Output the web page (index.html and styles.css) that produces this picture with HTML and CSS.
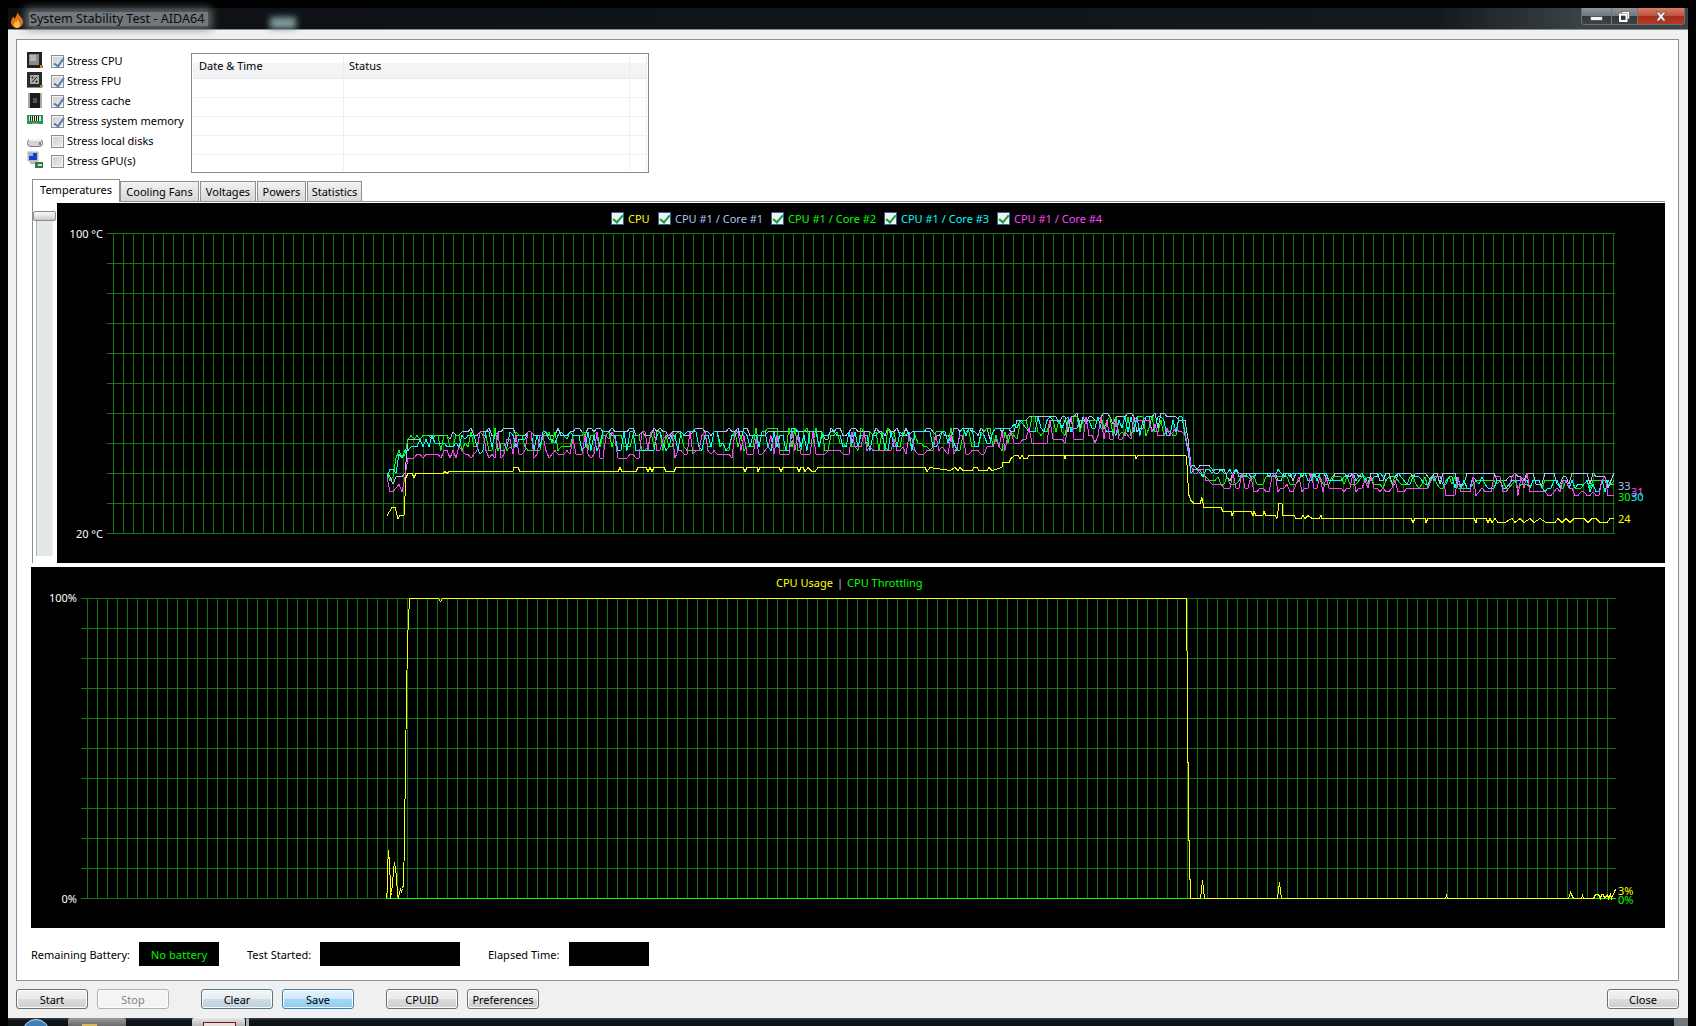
FILE: index.html
```html
<!DOCTYPE html>
<html lang="en">

<head>
    <meta charset="UTF-8">
    <title>System Stability Test - AIDA64</title>
    <link rel="stylesheet" href="styles.css">
</head>

<body>
    <div class="window">
        <div class="titlebar">
            <span class="title-smudge"></span>
            <svg class="title-icon" width="14" height="16" viewBox="0 0 14 16">
                <path d="M7 0c1 3 5 5 6 9 .6 3.500-2.500 7-6 7s-6.500-3-6-6.500c.3-2 1.500-3 2-5 .8.8 1.200 1.500 1.300 2.500C5.500 5 7.500 3 7 0z" fill="#e8701a"/>
                <path d="M7 7c.8 2 3 3 3 5.200S8.500 16 7 16s-3.200-1.500-3-3.500c.2-1.500 1.200-2 1.500-3.200.3.400.5.800.6 1.200C6.800 9.800 7.300 8.500 7 7z" fill="#fcc23a"/>
            </svg>
            <span class="title-text">System Stability Test - AIDA64</span>
            <div class="caption-buttons">
                <div class="caption-btn btn-min"><span class="min-bar"></span></div>
                <div class="caption-btn btn-restore">
                    <svg width="11" height="11" viewBox="0 0 11 11">
                        <path d="M3 .5h7.500V8H8.500V2.500H3z" fill="#fff" stroke="#333" stroke-width=".5"/>
                        <rect x="1" y="3.500" width="6.500" height="6.500" fill="none" stroke="#fff" stroke-width="2"/>
                    </svg>
                </div>
                <div class="caption-btn btn-close">
                    <svg width="14" height="11" viewBox="0 0 14 11">
                        <path d="M2 1h3l2 2.500L9 1h3L8.800 5.500 12 10H9L7 7.500 5 10H2l3.200-4.500z" fill="#f4f4f4" stroke="#444" stroke-width=".7"/>
                    </svg>
                </div>
            </div>
        </div>

        <div class="client">
            <div class="panel">
                <div class="top-row">
                    <ul class="stress-list">
                        <li>
                            <svg class="stress-icon" viewBox="0 0 16 16">
                                <rect x="0" y="0" width="15" height="16" fill="#222"/>
                                <rect x="2" y="2" width="10" height="11" fill="#8a8a8a"/>
                                <rect x="3" y="3" width="6" height="6" fill="#b4b4b4"/>
                                <rect x="13" y="13" width="3" height="3" fill="#c88a20"/>
                            </svg>
                            <span class="check checked"></span>Stress CPU
                        </li>
                        <li>
                            <svg class="stress-icon" viewBox="0 0 16 16">
                                <rect x="0" y="0" width="15" height="15" fill="#2a2a2a"/>
                                <rect x="3" y="3" width="9" height="9" fill="#a8a8a8"/>
                                <path d="M5 10l5-5M5 5h1v1H5zM9 9h1v1H9z" stroke="#222" fill="none"/>
                                <rect x="0" y="15" width="15" height="1" fill="#888"/>
                                <rect x="13" y="13" width="3" height="2" fill="#c88a20"/>
                            </svg>
                            <span class="check checked"></span>Stress FPU
                        </li>
                        <li>
                            <svg class="stress-icon" viewBox="0 0 16 16">
                                <rect x="1" y="1" width="14" height="15" fill="#aaa"/>
                                <rect x="3" y="1" width="10" height="15" fill="#1c1c1c"/>
                                <rect x="6" y="6" width="4" height="5" fill="#555"/>
                            </svg>
                            <span class="check checked"></span>Stress cache
                        </li>
                        <li>
                            <svg class="stress-icon" viewBox="0 0 16 16">
                                <rect x="0" y="3" width="16" height="9" fill="#1f9a5a"/>
                                <rect x="2" y="4" width="12" height="5" fill="#e8e8d0"/>
                                <path d="M3.500 4v5M5.500 4v5M7.500 4v5M9.500 4v5M11.500 4v5" stroke="#222"/>
                                <rect x="5" y="11" width="6" height="1" fill="#d0a020"/>
                            </svg>
                            <span class="check checked"></span>Stress system memory
                        </li>
                        <li>
                            <svg class="stress-icon" viewBox="0 0 16 16">
                                <rect x="0.500" y="7.500" width="15" height="7" rx="3" fill="#d4d4d4" stroke="#777"/>
                                <rect x="2" y="7" width="12" height="2" fill="#f2f2f2"/>
                                <rect x="12" y="10" width="2" height="3" fill="#5aa33c"/>
                            </svg>
                            <span class="check"></span>Stress local disks
                        </li>
                        <li>
                            <svg class="stress-icon" viewBox="0 0 16 16">
                                <rect x="1" y="0" width="10" height="9" fill="#d8d8d8" stroke="#888" stroke-width=".6"/>
                                <rect x="2" y="1" width="8" height="7" fill="#1a3fc0"/>
                                <rect x="2" y="1" width="4" height="3" fill="#8ab0f0"/>
                                <rect x="3" y="9" width="6" height="3" fill="#bbb"/>
                                <rect x="8" y="10" width="8" height="6" fill="#2f7a4a"/>
                                <rect x="11" y="12" width="4" height="2" fill="#d0e0c0"/>
                            </svg>
                            <span class="check"></span>Stress GPU(s)
                        </li>
                    </ul>

                    <table class="log-table">
                        <thead>
                            <tr>
                                <th class="col-date">Date &amp; Time</th>
                                <th class="col-status">Status</th>
                                <th class="col-end"></th>
                            </tr>
                        </thead>
                        <tbody>
                            <tr><td></td><td></td><td></td></tr>
                            <tr><td></td><td></td><td></td></tr>
                            <tr><td></td><td></td><td></td></tr>
                            <tr><td></td><td></td><td></td></tr>
                            <tr><td></td><td></td><td></td></tr>
                        </tbody>
                    </table>
                </div>

                <ul class="tabs">
                    <li class="tab active">Temperatures</li>
                    <li class="tab tab-fans">Cooling Fans</li>
                    <li class="tab tab-volt">Voltages</li>
                    <li class="tab tab-pow">Powers</li>
                    <li class="tab tab-stat">Statistics</li>
                </ul>

                <div class="tab-page">
                    <div class="slider">
                        <div class="slider-track"></div>
                        <div class="slider-thumb"></div>
                    </div>
                    <div class="chart chart-temp">
                        <svg id="tempChart" class="chart-svg" viewBox="57 203 1608 360">
                            <text class="axis" x="103" y="238">100 °C</text>
                            <text class="axis" x="103" y="538">20 °C</text>
                            <text class="end-val c-core1" x="1618" y="490">33</text>
                            <text class="end-val c-core4" x="1631" y="496">31</text>
                            <text class="end-val c-core2" x="1618" y="501">30</text>
                            <text class="end-val c-core3" x="1631" y="501">30</text>
                            <text class="end-val c-cpu" x="1618" y="523">24</text>
                        </svg>
                        <div class="legend legend-temp">
                            <span class="legend-item c-cpu item-cpu"><i class="legend-check"></i>CPU</span>
                            <span class="legend-item c-core1 item-core"><i class="legend-check"></i>CPU #1 / Core #1</span>
                            <span class="legend-item c-core2 item-core"><i class="legend-check"></i>CPU #1 / Core #2</span>
                            <span class="legend-item c-core3 item-core"><i class="legend-check"></i>CPU #1 / Core #3</span>
                            <span class="legend-item c-core4"><i class="legend-check"></i>CPU #1 / Core #4</span>
                        </div>
                    </div>
                </div>

                <div class="chart chart-usage">
                    <svg id="usageChart" class="chart-svg" viewBox="31 567 1634 361">
                        <text class="axis" x="77" y="602">100%</text>
                        <text class="axis" x="77" y="903">0%</text>
                        <text class="end-val c-cpu" x="1618" y="895">3%</text>
                        <text class="end-val c-core2" x="1618" y="904">0%</text>
                    </svg>
                    <div class="legend legend-usage">
                        <span class="c-cpu">CPU Usage</span>
                        <span class="sep">|</span>
                        <span class="c-core2">CPU Throttling</span>
                    </div>
                </div>

                <div class="status-row">
                    <label class="status-label lbl-battery">Remaining Battery:</label>
                    <div class="status-box box-short green-text">No battery</div>
                    <label class="status-label lbl-started">Test Started:</label>
                    <div class="status-box box-long"></div>
                    <label class="status-label lbl-elapsed">Elapsed Time:</label>
                    <div class="status-box box-short"></div>
                </div>
            </div>

            <div class="button-row">
                <button class="btn">Start</button>
                <button class="btn btn-disabled">Stop</button>
                <button class="btn btn-clear group-start">Clear</button>
                <button class="btn btn-save">Save</button>
                <button class="btn group-start">CPUID</button>
                <button class="btn">Preferences</button>
                <button class="btn btn-right">Close</button>
            </div>
        </div>

        <div class="taskbar">
            <span class="orb"></span>
            <span class="task task-a"></span>
            <span class="task task-b"></span>
            <span class="task task-c"></span>
            <span class="show-desktop"></span>
        </div>
    </div>

    <script src="chart.js"></script>
</body>

</html>
```

FILE: styles.css
```css
* {
    box-sizing: border-box;
}

html,
body {
    margin: 0;
    padding: 0;
    background: #000;
}

body {
    width: 1696px;
    height: 1026px;
    overflow: hidden;
    padding: 8px 8px 0;
    font-family: "Noto Sans", "Liberation Sans", sans-serif;
    font-size: 11px;
    color: #000;
}

ul {
    margin: 0;
    padding: 0;
    list-style: none;
}

.window {
    width: 1680px;
    height: 1018px;
    display: flex;
    flex-direction: column;
}

/* title bar */
.titlebar {
    position: relative;
    height: 22px;
    flex: none;
    display: flex;
    align-items: center;
    padding-left: 2px;
    background: linear-gradient(90deg, #0d1114 0, #10151a 60%, #14191d 85%, #3c4448 94%);
    border-bottom: 1px solid #8a8f92;
}

.title-smudge {
    position: absolute;
    left: 262px;
    top: 9px;
    width: 26px;
    height: 12px;
    background: #7f9a9a;
    filter: blur(3px);
}

.title-icon {
    flex: none;
    margin-top: 2px;
}

.title-text {
    position: relative;
    margin-left: 5px;
    padding: 0 4px 0 1px;
    font-size: 12.6px;
    color: #0c0c0c;
    background: rgba(125, 132, 134, 0.9);
    box-shadow: 0 0 9px 4px rgba(125, 132, 134, 0.75);
    line-height: 14px;
}

.caption-buttons {
    display: flex;
    margin-left: auto;
    margin-right: 3px;
    height: 17px;
    align-self: flex-start;
    border: 1px solid #6a6f72;
    border-top: 0;
    border-radius: 0 0 4px 4px;
    overflow: hidden;
}

.caption-btn {
    display: flex;
    align-items: center;
    justify-content: center;
    border-left: 1px solid #777;
}

.btn-min {
    width: 29px;
    border-left: 0;
    background: linear-gradient(#8f9497 0, #70777a 50%, #30363a 50%, #3c4246);
}

.min-bar {
    width: 11px;
    height: 3px;
    margin-top: 4px;
    background: #f4f4f4;
    box-shadow: 0 0 0 1px #555;
}

.btn-restore {
    width: 26px;
    background: linear-gradient(#8f9497 0, #70777a 50%, #30363a 50%, #3c4246);
}

.btn-close {
    width: 47px;
    background: linear-gradient(#d67d6c 0, #c2503c 50%, #a82c18 50%, #b23a28);
}

/* dialog body */
.client {
    flex: 1;
    background: #f0f0f0;
    padding: 9px 9px 0 8px;
}

.panel {
    height: 942px;
    background: #fff;
    border: 1px solid #8e8f94;
    padding: 12px 13px 0 10px;
}

.top-row {
    display: flex;
    height: 127px;
}

.stress-list {
    width: 164px;
    flex: none;
}

.stress-list li {
    height: 20px;
    display: flex;
    align-items: center;
    white-space: nowrap;
    line-height: 18px;
    padding-bottom: 2px;
}

.stress-icon {
    width: 16px;
    height: 16px;
    flex: none;
    align-self: flex-start;
    margin-right: 8px;
    overflow: visible;
}

.check {
    position: relative;
    width: 13px;
    height: 13px;
    flex: none;
    margin-right: 3px;
    border: 1px solid #8a8b8b;
    background: linear-gradient(135deg, #cfcfcf, #ececec);
    box-shadow: inset 0 0 0 1px #f2f2f2;
}

.check.checked::after {
    content: "";
    position: absolute;
    left: 4px;
    top: 0;
    width: 4px;
    height: 9px;
    border: solid #5a7cb4;
    border-width: 0 2px 2px 0;
    transform: rotate(35deg);
}

.log-table {
    width: 458px;
    height: 120px;
    margin-top: 1px;
    border: 1px solid #828790;
    border-collapse: separate;
    border-spacing: 0;
    padding: 1px;
    table-layout: fixed;
}

.log-table th {
    height: 24px;
    padding: 0 0 2px 6px;
    font-weight: 400;
    text-align: left;
    background: linear-gradient(#fff 36%, #f4f5f6 36%, #f1f2f3);
    border-bottom: 1px solid #e6e6e6;
    border-right: 1px solid #ececec;
}

.log-table .col-date {
    width: 151px;
}

.log-table .col-status {
    width: 286px;
    padding-left: 5px;
}

.log-table td {
    height: 19px;
    padding: 0;
    border-bottom: 1px solid #f0f0f0;
    border-right: 1px solid #f0f0f0;
}

.log-table tr:last-child td {
    height: 16px;
    border-bottom: 0;
}

/* tabs */
.tabs {
    display: flex;
    align-items: flex-end;
    height: 22px;
    margin-left: 5px;
    position: relative;
    z-index: 1;
}

.tab {
    height: 20px;
    margin-bottom: 0;
    display: flex;
    align-items: center;
    justify-content: center;
    border: 1px solid #8e8f94;
    border-bottom: 0;
    background: linear-gradient(#f2f2f2, #e4e4e4 50%, #d8d8d8);
}

.tab.active {
    width: 88px;
    height: 23px;
    margin-bottom: -1px;
    padding-bottom: 3px;
    background: #fff;
}

.tab-fans {
    width: 79px;
    margin-left: 0;
}

.tab-volt {
    width: 56px;
    margin-left: 1px;
}

.tab-pow {
    width: 49px;
    margin-left: 1px;
}

.tab-stat {
    width: 55px;
    margin-left: 1px;
}

.tab-page {
    display: flex;
    width: 1633px;
    height: 362px;
    margin-left: 5px;
    border-top: 1px solid #8e8f94;
    border-left: 1px solid #8e8f94;
    padding-top: 1px;
}

.slider {
    position: relative;
    width: 24px;
    flex: none;
}

.slider-track {
    width: 17px;
    height: 335px;
    margin: 18px 0 0 3px;
    background: #e4e8e9;
    border-left: 1px solid #b4b4b4;
    border-right: 1px solid #eef0f0;
}

.slider-thumb {
    position: absolute;
    left: 0;
    top: 8px;
    width: 23px;
    height: 10px;
    background: linear-gradient(#fafafa, #e6e6e6 50%, #c8c8c8);
    border: 1px solid #8c8c8c;
    border-radius: 2px;
}

/* charts */
.chart {
    position: relative;
    background: #000;
}

.chart-temp {
    width: 1608px;
    height: 360px;
}

.chart-usage {
    width: 1634px;
    height: 361px;
    margin: 4px 0 0 4px;
}

.chart-svg {
    position: absolute;
    left: 0;
    top: 0;
    width: 100%;
    height: 100%;
}

.axis {
    fill: #fff;
    font-size: 11px;
    text-anchor: end;
}

.end-val {
    font-size: 11px;
}

.c-cpu {
    color: #ff0;
    fill: #ff0;
}

.c-core1 {
    color: #a8c4f4;
    fill: #a8c4f4;
}

.c-core2 {
    color: #0f0;
    fill: #0f0;
}

.c-core3 {
    color: #0ff;
    fill: #0ff;
}

.c-core4 {
    color: #f4f;
    fill: #f4f;
}

.legend {
    position: absolute;
    display: flex;
    align-items: center;
    white-space: nowrap;
}

.legend-temp {
    left: 554px;
    top: 9px;
    height: 13px;
}

.legend-item {
    display: flex;
    align-items: center;
}

.item-cpu {
    width: 47px;
}

.item-core {
    width: 113px;
}

.legend-check {
    position: relative;
    width: 13px;
    height: 13px;
    flex: none;
    margin-right: 4px;
    background: #f0f4f8;
    border: 1px solid #3a6090;
}

.legend-check::after {
    content: "";
    position: absolute;
    left: 3px;
    top: 0;
    width: 4px;
    height: 8px;
    border: solid #12a030;
    border-width: 0 2px 2px 0;
    transform: rotate(40deg);
}

.legend-usage {
    left: 745px;
    top: 7px;
    height: 16px;
}

.legend-usage .sep {
    color: #bcd;
    margin: 0 4px;
}

/* bottom status row */
.status-row {
    display: flex;
    align-items: center;
    height: 24px;
    margin: 14px 0 0 4px;
}

.status-label {
    white-space: nowrap;
}

.lbl-battery {
    width: 108px;
}

.lbl-started {
    width: 73px;
    margin-left: 28px;
}

.lbl-elapsed {
    width: 81px;
    margin-left: 28px;
}

.status-box {
    height: 24px;
    background: #000;
    display: flex;
    align-items: center;
    justify-content: center;
}

.box-short {
    width: 80px;
}

.box-long {
    width: 140px;
}

.green-text {
    color: #0d0;
    font-weight: 500;
}

/* buttons */
.button-row {
    display: flex;
    gap: 9px;
    margin-top: 8px;
}

.btn {
    width: 72px;
    height: 20px;
    padding: 0;
    font-family: inherit;
    font-size: 11px;
    color: #000;
    border: 1px solid #707070;
    border-radius: 3px;
    background: linear-gradient(#f2f2f2, #ebebeb 48%, #dcdcdc 48%, #cfcfcf);
    box-shadow: inset 0 0 0 1px #fbfbfb;
}

.btn-disabled {
    color: #838383;
    border-color: #adb2b5;
    background: #f4f4f4;
}

.btn-clear {
    border-color: #5a7488;
    background: linear-gradient(#f2f6f9, #e4edf3 48%, #cfdde6 48%, #bccfdc);
}

.btn-save {
    border-color: #3c7fb1;
    background: linear-gradient(#e8f5fc, #cde9f8 48%, #a7d9f5 48%, #8ccbf0);
}

.group-start {
    margin-left: 23px;
}

.btn-right {
    margin-left: auto;
}

/* sliver of the taskbar under the window */
.taskbar {
    height: 8px;
    flex: none;
    display: flex;
    align-items: flex-start;
    overflow: hidden;
    background: linear-gradient(#3a4248, #10161a 30%, #0c1114);
}

.orb {
    width: 28px;
    height: 28px;
    flex: none;
    margin: 1px 0 0 14px;
    border-radius: 50%;
    background: #3f7fb8;
    border: 1px solid #cfe0f0;
}

.task {
    position: relative;
    height: 8px;
    flex: none;
    border-radius: 2px 2px 0 0;
}

.task-a {
    width: 58px;
    margin-left: 18px;
    background: linear-gradient(#9c9c9c, #6a6a6a);
}

.task-a::after {
    content: "";
    position: absolute;
    left: 14px;
    top: 6px;
    width: 15px;
    height: 2px;
    background: #d8b860;
}

.task-b {
    width: 53px;
    margin-left: 66px;
    background: linear-gradient(#e8e8e8, #b8b8b8);
}

.task-b::after {
    content: "";
    position: absolute;
    left: 11px;
    top: 4px;
    width: 31px;
    height: 4px;
    border: 1px solid #6a1c1c;
    border-bottom: 0;
    background: #e8e0d8;
}

.task-c {
    width: 3px;
    margin-left: 1px;
    background: #b0b0b0;
}

.show-desktop {
    width: 14px;
    height: 8px;
    flex: none;
    margin-left: auto;
    background: #70787c;
}
```

FILE: chart.js
```js
// drawing of the two graphs, in page coordinates
var NS = 'http://www.w3.org/2000/svg';

function add(svg, name, attrs) {
    var el = document.createElementNS(NS, name);
    for (var k in attrs) {
        el.setAttribute(k, attrs[k]);
    }
    svg.insertBefore(el, svg.querySelector('text'));
    return el;
}

function line(svg, points, color) {
    add(svg, 'polyline', {
        points: points.map(function(p) { return p[0] + ',' + p[1]; }).join(' '),
        fill: 'none',
        stroke: color,
        'stroke-width': 1,
        'shape-rendering': 'crispEdges'
    });
}

function grid(svg, x0, x1, left, right, y0) {
    var color = '#127412';
    for (var x = x0; x <= x1; x += 10) {
        line(svg, [[x + 0.5, y0], [x + 0.5, y0 + 301]], color);
    }
    for (var y = y0; y <= y0 + 300; y += 30) {
        line(svg, [[left, y + 0.5], [right, y + 0.5]], color);
    }
}

function random(seed) {
    return function() {
        seed = (seed * 16807) % 2147483647;
        return seed / 2147483647;
    };
}

// top and bottom of a trace at x, from [x, top, bottom] keys
function band(keys, x) {
    for (var i = 1; i < keys.length; i++) {
        if (x <= keys[i][0]) {
            var a = keys[i - 1], b = keys[i];
            var t = (x - a[0]) / (b[0] - a[0]);
            return [a[1] + (b[1] - a[1]) * t, a[2] + (b[2] - a[2]) * t];
        }
    }
    return keys[keys.length - 1].slice(1);
}

// pull: how often a new reading lands at the low end of the band, 0..1
// 80 degrees over 300px, readings are whole degrees
function noisy(keys, seed, pull, hold) {
    var rnd = random(seed), pts = [], t = 0;
    for (var x = keys[0][0]; x <= 1614; x += 3) {
        if (rnd() > hold) {
            var r = rnd() * 0.35;
            t = rnd() < pull ? 1 - r : r;
        }
        var b = band(keys, x);
        var y = b[0] + (b[1] - b[0]) * t;
        pts.push([x, Math.round(y / 3.75) * 3.75 + 0.5]);
    }
    return pts;
}

var core1 = [[387, 473, 484], [404, 475, 488], [407, 440, 448], [412, 436, 438], [440, 433, 438], [480, 428, 438], [1000, 428, 438], [1030, 413, 430], [1186, 413, 430], [1190, 462, 466], [1215, 468, 472], [1240, 470, 484], [1614, 472, 486]];
var core2 = [[387, 473, 490], [407, 436, 450], [480, 428, 452], [1000, 428, 450], [1030, 415, 436], [1186, 413, 436], [1190, 466, 474], [1220, 472, 484], [1614, 480, 490]];
var core3 = [[387, 476, 490], [407, 440, 450], [440, 433, 445], [480, 430, 452], [1000, 428, 450], [1030, 414, 434], [1186, 414, 436], [1190, 468, 474], [1614, 480, 494]];
var core4 = [[387, 476, 492], [404, 480, 492], [407, 452, 458], [440, 452, 456], [460, 446, 458], [480, 430, 458], [1000, 430, 454], [1030, 420, 444], [1090, 415, 442], [1150, 418, 438], [1186, 426, 434], [1192, 470, 474], [1220, 470, 490], [1614, 474, 498]];

var cpuTemp = [[387, 515], [392, 507], [395, 507], [398, 518], [400, 515], [404, 515], [406, 477], [408, 473], [412, 473], [414, 477], [416, 473], [443, 473], [445, 471], [447, 473], [449, 471], [453, 471], [513, 471], [514, 467], [518, 467], [520, 471], [618, 471], [620, 467], [622, 471], [636, 471], [638, 467], [646, 467], [648, 471], [650, 467], [652, 471], [654, 467], [664, 467], [666, 471], [674, 471], [676, 467], [743, 467], [745, 471], [747, 467], [757, 467], [758, 471], [760, 467], [779, 467], [781, 471], [783, 467], [797, 467], [799, 471], [801, 467], [803, 467], [805, 471], [808, 467], [812, 471], [815, 471], [818, 467], [900, 467], [925, 467], [927, 471], [930, 467], [950, 470], [955, 467], [958, 470], [960, 467], [963, 470], [972, 470], [974, 467], [977, 467], [979, 470], [987, 470], [989, 467], [992, 470], [1002, 467], [1003, 462], [1009, 462], [1011, 458], [1015, 455], [1018, 455], [1020, 458], [1022, 455], [1024, 458], [1027, 458], [1029, 455], [1064, 455], [1065, 458], [1066, 455], [1135, 455], [1136, 458], [1138, 455], [1186, 455], [1187, 464], [1188, 482], [1189, 495], [1191, 500], [1194, 503], [1200, 503], [1202, 497], [1204, 507], [1221, 507], [1223, 511], [1231, 511], [1232, 515], [1234, 511], [1251, 511], [1253, 515], [1254, 511], [1256, 515], [1263, 515], [1264, 511], [1266, 515], [1275, 515], [1277, 518], [1279, 503], [1282, 503], [1283, 515], [1294, 515], [1296, 518], [1301, 518], [1303, 515], [1305, 518], [1308, 515], [1312, 518], [1319, 518], [1321, 515], [1322, 518], [1411, 518], [1413, 522], [1415, 518], [1425, 518], [1426, 522], [1428, 518], [1474, 518], [1476, 522], [1477, 518], [1486, 518], [1488, 522], [1490, 518], [1492, 522], [1495, 518], [1498, 522], [1505, 522], [1512, 518], [1515, 522], [1520, 518], [1524, 522], [1530, 518], [1534, 522], [1540, 518], [1546, 522], [1555, 522], [1558, 518], [1562, 522], [1566, 518], [1570, 522], [1574, 518], [1584, 518], [1588, 522], [1592, 518], [1596, 518], [1600, 522], [1607, 522], [1610, 518], [1614, 518]];

var temp = document.getElementById('tempChart');
grid(temp, 113, 1613, 107, 1615, 233);
line(temp, noisy(core1, 1234, 0.25, 0.3), '#a8c4f4');
line(temp, noisy(core2, 8271, 0.5, 0.2), '#00ff00');
line(temp, noisy(core3, 5527, 0.5, 0.1), '#00ffff');
line(temp, noisy(core4, 9173, 0.72, 0.15), '#ff44ff');
line(temp, cpuTemp.map(function(p) { return [p[0], p[1] + 0.5]; }), '#ffff00');

var cpuUsage = [[386, 898], [387, 887], [387, 867], [388, 850], [389, 863], [390, 885], [390, 898], [391, 892], [392, 884], [393, 870], [394, 862], [395, 868], [396, 876], [397, 894], [398, 898], [399, 892], [400, 889], [401, 891], [402, 888], [403, 884], [404, 840], [405, 760], [406, 700], [407, 640], [409, 598], [438, 598], [440, 601], [442, 598], [1186, 598], [1187, 700], [1188, 820], [1190, 898], [1200, 898], [1202, 880], [1204, 898], [1277, 898], [1279, 882], [1281, 898], [1445, 898], [1446, 895], [1447, 898], [1568, 898], [1570, 892], [1573, 898], [1581, 898], [1582, 895], [1583, 898], [1593, 898], [1595, 894], [1598, 894], [1600, 898], [1601, 894], [1603, 894], [1604, 898], [1607, 894], [1608, 898], [1610, 894], [1611, 898], [1615, 889]];

var usage = document.getElementById('usageChart');
grid(usage, 87, 1607, 81, 1616, 598);
line(usage, [[386, 898.5], [1616, 898.5]], '#00ff00');
line(usage, cpuUsage.map(function(p) { return [p[0] + 0.5, p[1] + 0.5]; }), '#ffff00');
```
